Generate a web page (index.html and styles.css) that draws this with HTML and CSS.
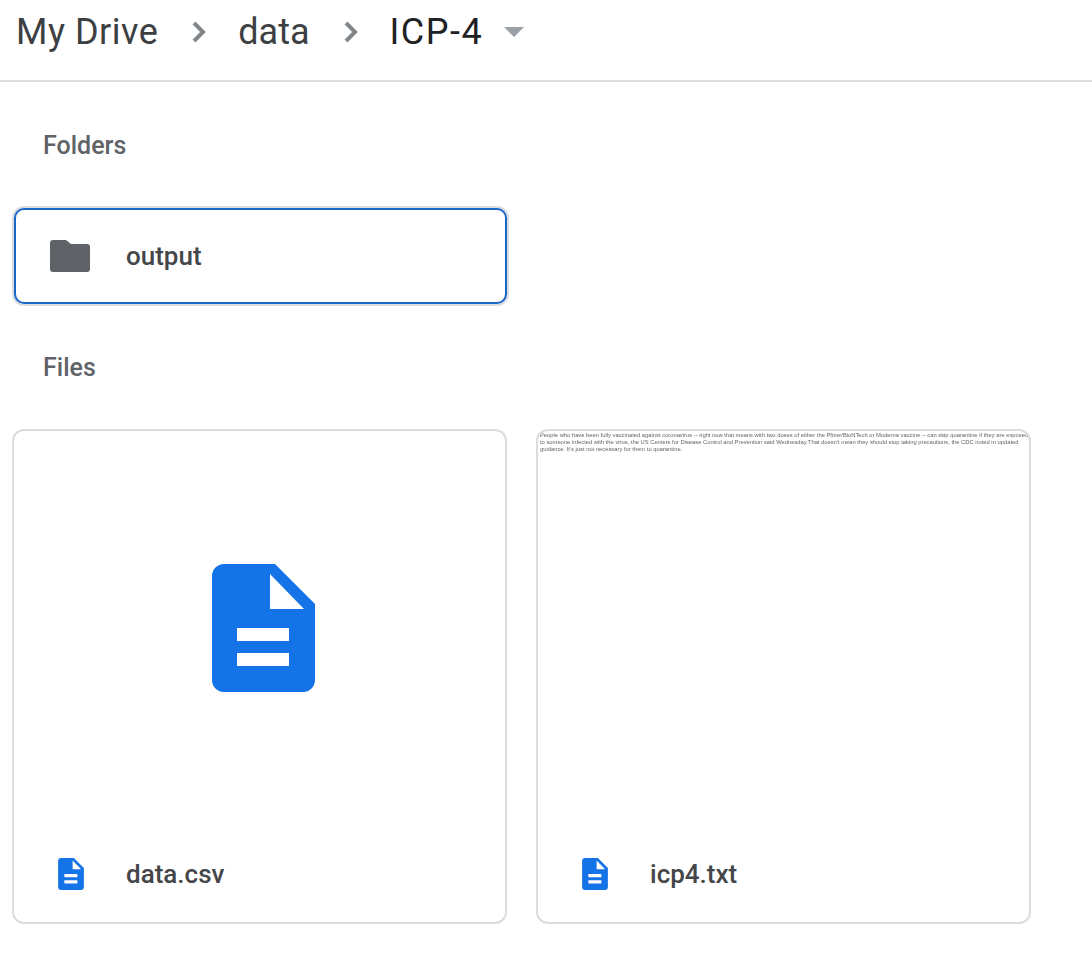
FILE: index.html
```html
<!DOCTYPE html>
<html lang="en">

<head>
    <meta charset="UTF-8">
    <title>ICP-4 - Google Drive</title>
    <link rel="stylesheet" href="styles.css">
</head>

<body>
    <header class="path-bar">
        <span class="crumb">My Drive</span>
        <svg class="chevron" viewBox="0 0 18 26"><polyline points="4 4 13 13 4 22"></polyline></svg>
        <span class="crumb folder">data</span>
        <svg class="chevron" viewBox="0 0 18 26"><polyline points="4 4 13 13 4 22"></polyline></svg>
        <span class="crumb current">ICP-4</span>
        <svg class="caret" viewBox="0 0 20 10"><polygon points="0 0 20 0 10 10"></polygon></svg>
    </header>

    <main>
        <div class="section-label">Folders</div>
        <div class="folder-card">
            <svg class="folder-icon" viewBox="0 0 40 32">
                <path d="M3 0h13l5 4h16a3 3 0 0 1 3 3v22a3 3 0 0 1-3 3H3a3 3 0 0 1-3-3V3a3 3 0 0 1 3-3z"></path>
            </svg>
            <span class="item-name">output</span>
        </div>

        <div class="section-label files-label">Files</div>
        <div class="file-grid">
            <div class="file-card">
                <div class="preview icon-preview">
                    <svg class="doc-large" viewBox="0 0 103 128">
                        <path d="M12 0H63L103 40V116a12 12 0 0 1-12 12H12a12 12 0 0 1-12-12V12A12 12 0 0 1 12 0z" fill="#1473e6"></path>
                        <path d="M58 10L92 45H58z" fill="#fff"></path>
                        <rect x="25" y="64" width="52" height="13" fill="#fff"></rect>
                        <rect x="25" y="89" width="52" height="13" fill="#fff"></rect>
                    </svg>
                </div>
                <div class="file-footer">
                    <svg class="doc-small" viewBox="0 0 103 128">
                        <path d="M12 0H63L103 40V116a12 12 0 0 1-12 12H12a12 12 0 0 1-12-12V12A12 12 0 0 1 12 0z" fill="#1473e6"></path>
                        <path d="M58 10L92 45H58z" fill="#fff"></path>
                        <rect x="25" y="64" width="52" height="13" fill="#fff"></rect>
                        <rect x="25" y="89" width="52" height="13" fill="#fff"></rect>
                    </svg>
                    <span class="item-name">data.csv</span>
                </div>
            </div>

            <div class="file-card">
                <div class="preview text-preview">People who have been fully vaccinated against coronavirus -- right now that means with two doses of either the Pfizer/BioNTech or Moderna vaccine -- can skip quarantine if they are exposed to someone infected with the virus, the US Centers for Disease Control and Prevention said Wednesday.That doesn't mean they should stop taking precautions, the CDC noted in updated guidance. It's just not necessary for them to quarantine.</div>
                <div class="file-footer">
                    <svg class="doc-small" viewBox="0 0 103 128">
                        <path d="M12 0H63L103 40V116a12 12 0 0 1-12 12H12a12 12 0 0 1-12-12V12A12 12 0 0 1 12 0z" fill="#1473e6"></path>
                        <path d="M58 10L92 45H58z" fill="#fff"></path>
                        <rect x="25" y="64" width="52" height="13" fill="#fff"></rect>
                        <rect x="25" y="89" width="52" height="13" fill="#fff"></rect>
                    </svg>
                    <span class="item-name">icp4.txt</span>
                </div>
            </div>
        </div>
    </main>
</body>

</html>
```

FILE: styles.css
```css
html,
body {
    margin: 0;
    padding: 0;
    background-color: #fff;
    font-family: Roboto, "Liberation Sans", sans-serif;
    color: #3c4043;
}

.path-bar {
    height: 82px;
    box-sizing: border-box;
    display: flex;
    align-items: center;
    padding: 0 0 16px 16px;
    border-bottom: 2px solid #dadce0;
}

.crumb {
    font-size: 36px;
    letter-spacing: 0.5px;
    color: #3c4043;
}

.crumb.folder {
    letter-spacing: 0;
}

.crumb.current {
    letter-spacing: 1.5px;
    color: #202124;
}

.chevron {
    width: 18px;
    height: 26px;
    margin: 0 30px 0 32px;
    fill: none;
    stroke: #80868b;
    stroke-width: 4;
}

.caret {
    width: 20px;
    height: 10px;
    margin-left: 21px;
    fill: #9aa0a6;
}

.section-label {
    font-size: 25px;
    font-weight: 500;
    color: #5f6368;
    margin: 49px 0 0 43px;
    line-height: 30px;
}

.folder-card {
    width: 493px;
    height: 96px;
    box-sizing: border-box;
    margin: 47px 0 0 14px;
    display: flex;
    align-items: center;
    padding-left: 34px;
    border: 2px solid #1a66c9;
    border-radius: 10px;
    box-shadow: 0 0 0 2px #dadce0;
}

.folder-icon {
    width: 40px;
    height: 32px;
    fill: #5f6368;
}

.item-name {
    font-size: 26px;
    font-weight: 500;
    color: #444649;
}

.folder-card .item-name {
    margin-left: 36px;
}

.file-grid {
    display: flex;
    gap: 29px;
    margin: 46px 0 0 12px;
}

.file-card {
    width: 495px;
    height: 495px;
    box-sizing: border-box;
    display: flex;
    flex-direction: column;
    border: 2px solid #dadce0;
    border-radius: 12px;
    overflow: hidden;
}

.preview {
    flex: 1;
    min-height: 0;
}

.icon-preview {
    display: flex;
    align-items: center;
    justify-content: center;
    padding: 0 0 2px 7px;
}

.doc-large {
    width: 103px;
    height: 128px;
}

.text-preview {
    padding: 1px 0 0 2px;
    font-family: "Liberation Sans", sans-serif;
    font-size: 5.8px;
    line-height: 7px;
    color: #5f6368;
    filter: blur(0.3px);
}

.file-footer {
    height: 96px;
    display: flex;
    align-items: center;
    padding-left: 44px;
}

.doc-small {
    width: 26px;
    height: 32px;
    margin-right: 42px;
}
```
